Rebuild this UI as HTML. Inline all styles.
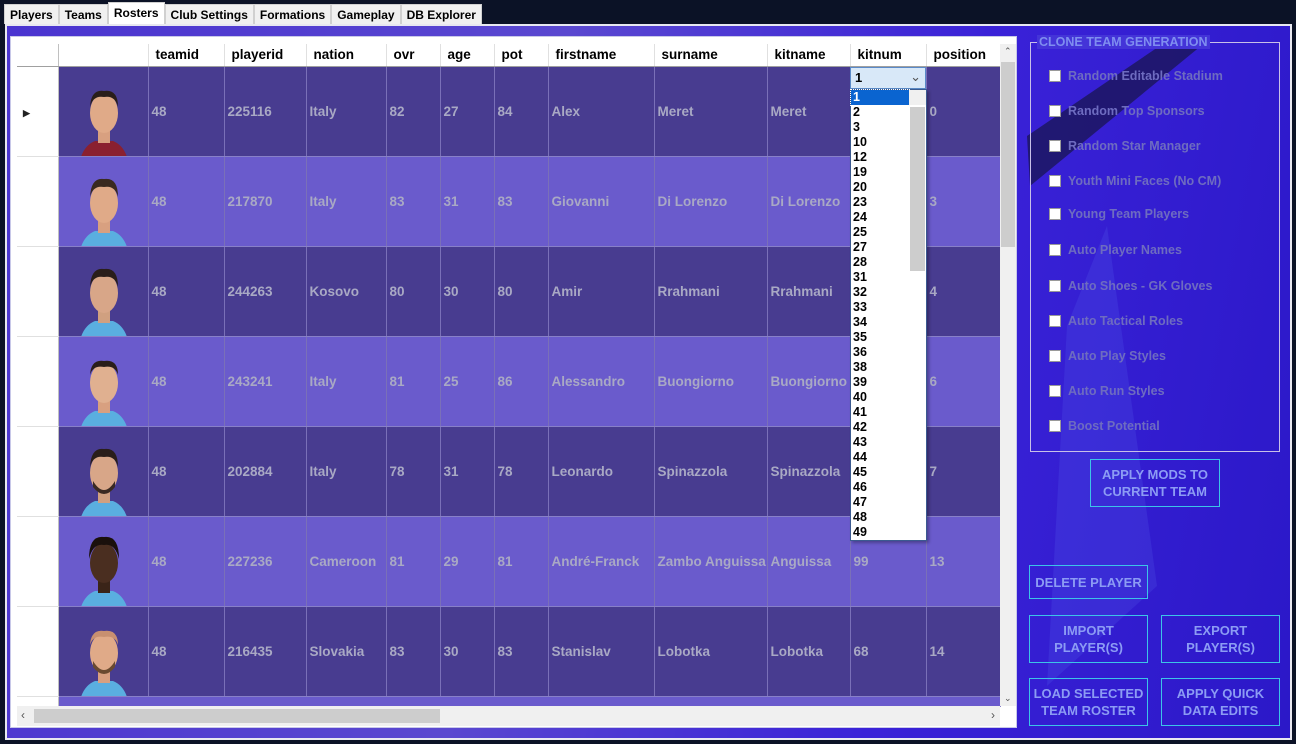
<!DOCTYPE html>
<html><head><meta charset="utf-8"><style>
*{margin:0;padding:0;box-sizing:border-box}
body{width:1296px;height:744px;background:#0b1226;font-family:"Liberation Sans",sans-serif;position:relative;overflow:hidden}
.tabs{position:absolute;left:4px;top:4px;height:20px;display:flex;font-size:12px;font-weight:bold}
.tab{background:#f0f0f0;border:1px solid #d0d0d0;border-bottom:none;padding:3px 5px 0;height:20px;color:#000}
.tab.a{background:#fff;height:22px;margin-top:-2px;padding-top:3px}
.frame{position:absolute;left:5px;top:24px;width:1287px;height:716px;background:#e8e8f0}
.bg{position:absolute;left:7px;top:26px;width:1283px;height:712px;background:linear-gradient(100deg,#4a34d0 0%,#5a48d0 40%,#3a22d8 70%,#2b18c8 100%);overflow:hidden}
.gridbox{position:absolute;left:10px;top:36px;width:1007px;height:692px;background:#fff;border:1px solid #c8c8e8}
table{position:absolute;left:17px;top:44px;border-collapse:collapse;table-layout:fixed;font-size:13.5px;font-weight:bold}
th{height:22px;background:#fff;text-align:left;padding-left:7px;color:#000;border-right:1px solid #e0e0e0;border-bottom:1px solid #a0a0a0;font-size:13.5px}
td{height:90px;color:#a9a9c4;padding-left:3px;border-right:1px solid #7a70b8;border-bottom:1px solid #8880c8;overflow:hidden;white-space:nowrap}
tr.d td{background:#483c90}
tr.l td{background:#6a5bcc}
td.rh{background:#fff!important;border-right:1px solid #c0c0c0;border-bottom:1px solid #e0e0e0;padding:0}
td.ph{padding:0;position:relative}
.face{position:absolute;left:22px;top:12px;width:46px;height:78px}
.vs{position:absolute;left:1000px;top:44px;width:16px;height:662px;background:#f0f0f0}
.vs .t{position:absolute;left:1px;top:18px;width:14px;height:185px;background:#cdcdcd}
.hs{position:absolute;left:17px;top:706px;width:983px;height:20px;background:#f0f0f0}
.hs .t{position:absolute;left:17px;top:3px;width:406px;height:14px;background:#cdcdcd}
.combo{position:absolute;left:850px;top:67px;width:76px;height:22px;background:#d8e8f8;border:1px solid #5a8ac8;font-size:13px;font-weight:bold;padding:2px 4px}
.list{position:absolute;left:850px;top:89px;width:77px;height:452px;background:#fff;border:1px solid #3a5a90;font-size:12.5px;font-weight:bold;line-height:15px;box-shadow:2px 2px 3px rgba(0,0,0,.3)}
.list div{padding-left:2px;height:15px}
.list .sel{background:#0a64d0;color:#fff;width:58px;outline:1px dotted #fff}
.lsb{position:absolute;right:0;top:0;width:17px;height:450px;background:#f0f0f0}
.lsb .t{position:absolute;left:1px;top:17px;width:15px;height:164px;background:#cdcdcd}
.grp{position:absolute;left:1030px;top:42px;width:250px;height:410px;border:1px solid #c8c0e8}
.grp .lg{position:absolute;left:6px;top:-8px;background:#4434d8;padding:0 2px;color:#7f8ef0;font-size:12.5px;font-weight:bold}
.cb{position:absolute;left:1049px;font-size:12.5px;font-weight:bold;color:#6e6cc0;display:flex;align-items:center}
.cb i{display:inline-block;width:12px;height:12px;background:#fff;margin-right:7px;border:1px solid #999}
.btn{position:absolute;border:1px solid #3cc4e8;color:#8c9cf4;font-size:13px;font-weight:bold;text-align:center;display:flex;align-items:center;justify-content:center;line-height:17px}
</style></head><body>
<div class="tabs"><div class="tab">Players</div><div class="tab">Teams</div><div class="tab a">Rosters</div><div class="tab">Club Settings</div><div class="tab">Formations</div><div class="tab">Gameplay</div><div class="tab">DB Explorer</div></div>
<div class="frame"></div>
<div class="bg">
<svg width="1283" height="712" style="position:absolute;left:0;top:0"><polygon points="1020,110 1160,15 1200,15 1023,160" fill="#1a1550" opacity=".75"/><polygon points="1100,200 1150,560 1040,660 1060,300" fill="#5a6af0" opacity=".2"/></svg>
</div>
<div class="gridbox"></div>
<table>
<colgroup><col style="width:41px"><col style="width:90px"><col style="width:76px"><col style="width:82px"><col style="width:80px"><col style="width:54px"><col style="width:54px"><col style="width:54px"><col style="width:106px"><col style="width:113px"><col style="width:83px"><col style="width:76px"><col style="width:74px"></colgroup>
<tr><th style="border-right:1px solid #c0c0c0"></th><th></th><th>teamid</th><th>playerid</th><th>nation</th><th>ovr</th><th>age</th><th>pot</th><th>firstname</th><th>surname</th><th>kitname</th><th>kitnum</th><th>position</th></tr>
<tr class="d"><td class="rh"><span style="margin-left:6px;font-size:9px;color:#222">&#9654;</span></td><td class="ph"><svg class="face" viewBox="0 0 46 78"><path d="M0 78 Q4 66 14 62 L32 62 Q42 66 46 78Z" fill="#8a2030"/><rect x="17" y="50" width="12" height="14" fill="#d8a080"/><ellipse cx="23" cy="34" rx="14" ry="20" fill="#e0aa88"/><path d="M9 28 Q10 10 23 12 Q37 10 37 28 Q34 16 23 18 Q12 16 9 28Z" fill="#2a1e1a"/></svg></td><td>48</td><td>225116</td><td>Italy</td><td>82</td><td>27</td><td>84</td><td>Alex</td><td>Meret</td><td>Meret</td><td>0</td><td>0</td></tr>
<tr class="l"><td class="rh"></td><td class="ph"><svg class="face" viewBox="0 0 46 78"><path d="M0 78 Q4 66 14 62 L32 62 Q42 66 46 78Z" fill="#5aaee0"/><rect x="17" y="50" width="12" height="14" fill="#d8a080"/><ellipse cx="23" cy="34" rx="14" ry="20" fill="#e0aa88"/><path d="M9 28 Q10 8 23 10 Q37 8 37 28 Q34 16 23 18 Q12 16 9 28Z" fill="#3a2a20"/></svg></td><td>48</td><td>217870</td><td>Italy</td><td>83</td><td>31</td><td>83</td><td>Giovanni</td><td>Di Lorenzo</td><td>Di Lorenzo</td><td>22</td><td>3</td></tr>
<tr class="d"><td class="rh"></td><td class="ph"><svg class="face" viewBox="0 0 46 78"><path d="M0 78 Q4 66 14 62 L32 62 Q42 66 46 78Z" fill="#5aaee0"/><rect x="17" y="50" width="12" height="14" fill="#d0a080"/><ellipse cx="23" cy="34" rx="14" ry="20" fill="#d8a688"/><path d="M9 28 Q10 8 23 10 Q37 8 37 28 Q34 16 23 18 Q12 16 9 28Z" fill="#2a1e1a"/></svg></td><td>48</td><td>244263</td><td>Kosovo</td><td>80</td><td>30</td><td>80</td><td>Amir</td><td>Rrahmani</td><td>Rrahmani</td><td>13</td><td>4</td></tr>
<tr class="l"><td class="rh"></td><td class="ph"><svg class="face" viewBox="0 0 46 78"><path d="M0 78 Q4 66 14 62 L32 62 Q42 66 46 78Z" fill="#5aaee0"/><rect x="17" y="50" width="12" height="14" fill="#d8a080"/><ellipse cx="23" cy="34" rx="14" ry="20" fill="#e0b090"/><path d="M9 26 Q10 10 23 12 Q37 10 37 26 Q34 16 23 18 Q12 16 9 26Z" fill="#2a1e1a"/></svg></td><td>48</td><td>243241</td><td>Italy</td><td>81</td><td>25</td><td>86</td><td>Alessandro</td><td>Buongiorno</td><td>Buongiorno</td><td>4</td><td>6</td></tr>
<tr class="d"><td class="rh"></td><td class="ph"><svg class="face" viewBox="0 0 46 78"><path d="M0 78 Q4 66 14 62 L32 62 Q42 66 46 78Z" fill="#5aaee0"/><rect x="17" y="50" width="12" height="14" fill="#d0a080"/><ellipse cx="23" cy="34" rx="14" ry="20" fill="#d8a688"/><path d="M9 28 Q10 8 23 10 Q37 8 37 28 Q34 16 23 18 Q12 16 9 28Z" fill="#2a1e1a"/><path d="M12 42 Q23 60 34 42 L34 48 Q23 62 12 48Z" fill="#3a2a22"/></svg></td><td>48</td><td>202884</td><td>Italy</td><td>78</td><td>31</td><td>78</td><td>Leonardo</td><td>Spinazzola</td><td>Spinazzola</td><td>37</td><td>7</td></tr>
<tr class="l"><td class="rh"></td><td class="ph"><svg class="face" viewBox="0 0 46 78"><path d="M0 78 Q4 66 14 62 L32 62 Q42 66 46 78Z" fill="#5aaee0"/><rect x="17" y="50" width="12" height="14" fill="#3a2418"/><ellipse cx="23" cy="34" rx="14" ry="20" fill="#4a2e20"/><path d="M8 30 Q8 6 23 8 Q38 6 38 30 Q34 14 23 16 Q12 14 8 30Z" fill="#1a100c"/></svg></td><td>48</td><td>227236</td><td>Cameroon</td><td>81</td><td>29</td><td>81</td><td>André-Franck</td><td>Zambo Anguissa</td><td>Anguissa</td><td>99</td><td>13</td></tr>
<tr class="d"><td class="rh"></td><td class="ph"><svg class="face" viewBox="0 0 46 78"><path d="M0 78 Q4 66 14 62 L32 62 Q42 66 46 78Z" fill="#5aaee0"/><rect x="17" y="50" width="12" height="14" fill="#d8a080"/><ellipse cx="23" cy="34" rx="14" ry="20" fill="#e0aa88"/><path d="M9 26 Q10 10 23 12 Q37 10 37 26 Q34 16 23 18 Q12 16 9 26Z" fill="#c89070"/><path d="M12 42 Q23 60 34 42 L34 48 Q23 62 12 48Z" fill="#6a4a30"/></svg></td><td>48</td><td>216435</td><td>Slovakia</td><td>83</td><td>30</td><td>83</td><td>Stanislav</td><td>Lobotka</td><td>Lobotka</td><td>68</td><td>14</td></tr>
<tr class="l"><td class="rh" style="height:10px"></td><td style="height:10px" colspan="12"></td></tr>
</table>
<div class="vs"><div class="t"></div><span style="position:absolute;left:4px;top:2px;font-size:9px;color:#555">&#8963;</span><span style="position:absolute;left:4px;bottom:2px;font-size:9px;color:#555">&#8964;</span></div>
<div class="hs"><div class="t"></div><span style="position:absolute;left:4px;top:2px;font-size:12px;color:#555">&lsaquo;</span><span style="position:absolute;right:5px;top:2px;font-size:12px;color:#555">&rsaquo;</span></div>
<div class="combo">1<span style="position:absolute;right:4px;top:1px;font-weight:normal;color:#555">&#8964;</span></div>
<div class="list"><div class="lsb"><div class="t"></div></div>
<div class="sel">1</div><div>2</div><div>3</div><div>10</div><div>12</div><div>19</div><div>20</div><div>23</div><div>24</div><div>25</div><div>27</div><div>28</div><div>31</div><div>32</div><div>33</div><div>34</div><div>35</div><div>36</div><div>38</div><div>39</div><div>40</div><div>41</div><div>42</div><div>43</div><div>44</div><div>45</div><div>46</div><div>47</div><div>48</div><div>49</div>
</div>
<div class="grp"><span class="lg">CLONE TEAM GENERATION</span></div>
<div class="cb" style="top:69px"><i></i>Random Editable Stadium</div>
<div class="cb" style="top:104px"><i></i>Random Top Sponsors</div>
<div class="cb" style="top:139px"><i></i>Random Star Manager</div>
<div class="cb" style="top:174px"><i></i>Youth Mini Faces (No CM)</div>
<div class="cb" style="top:207px"><i></i>Young Team Players</div>
<div class="cb" style="top:243px"><i></i>Auto Player Names</div>
<div class="cb" style="top:279px"><i></i>Auto Shoes - GK Gloves</div>
<div class="cb" style="top:314px"><i></i>Auto Tactical Roles</div>
<div class="cb" style="top:349px"><i></i>Auto Play Styles</div>
<div class="cb" style="top:384px"><i></i>Auto Run Styles</div>
<div class="cb" style="top:419px"><i></i>Boost Potential</div>
<div class="btn" style="left:1090px;top:459px;width:130px;height:48px">APPLY MODS TO<br>CURRENT TEAM</div>
<div class="btn" style="left:1029px;top:565px;width:119px;height:34px">DELETE PLAYER</div>
<div class="btn" style="left:1029px;top:615px;width:119px;height:48px">IMPORT<br>PLAYER(S)</div>
<div class="btn" style="left:1161px;top:615px;width:119px;height:48px">EXPORT<br>PLAYER(S)</div>
<div class="btn" style="left:1029px;top:678px;width:119px;height:48px">LOAD SELECTED<br>TEAM ROSTER</div>
<div class="btn" style="left:1161px;top:678px;width:119px;height:48px">APPLY QUICK<br>DATA EDITS</div>
</body></html>
